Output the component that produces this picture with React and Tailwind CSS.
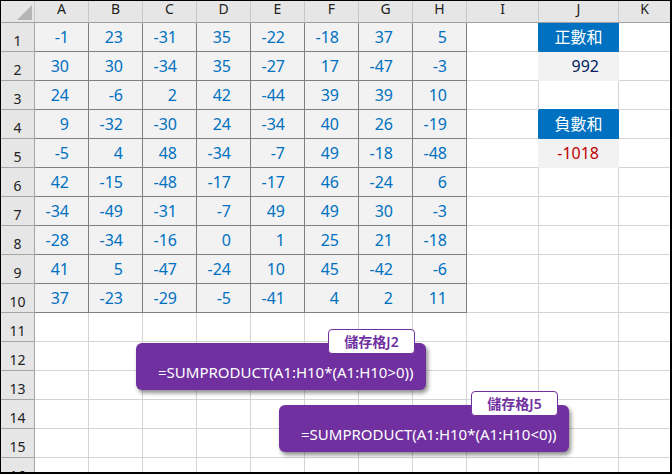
import React from "react";

const COLS = ["A", "B", "C", "D", "E", "F", "G", "H", "I", "J", "K"];

const DATA = [
  [-1, 23, -31, 35, -22, -18, 37, 5],
  [30, 30, -34, 35, -27, 17, -47, -3],
  [24, -6, 2, 42, -44, 39, 39, 10],
  [9, -32, -30, 24, -34, 40, 26, -19],
  [-5, 4, 48, -34, -7, 49, -18, -48],
  [42, -15, -48, -17, -17, 46, -24, 6],
  [-34, -49, -31, -7, 49, 49, 30, -3],
  [-28, -34, -16, 0, 1, 25, 21, -18],
  [41, 5, -47, -24, 10, 45, -42, -6],
  [37, -23, -29, -5, -41, 4, 2, 11],
];

const ROWS = Array.from({ length: 16 }, (_, i) => i + 1);

const font = { fontFamily: '"Noto Sans", "Noto Sans CJK TC", sans-serif' };

// J column content (rows 1..5)
const J_CELLS = {
  1: { text: "正數和", kind: "head" },
  2: { text: "992", kind: "pos" },
  4: { text: "負數和", kind: "head" },
  5: { text: "-1018", kind: "neg" },
};

const cellClass = (r, c) => {
  // c: 1..11 -> A..K
  if (c <= 8 && r <= 10) {
    return "bg-[#f2f2f2] border-r border-b border-[#808080] justify-end pr-[19px] text-[#0070c0]";
  }
  if (c === 9) {
    const edge = r === 1 || r === 4 ? "border-r-[#0070c0]" : r === 2 || r === 5 ? "border-r-[#f2f2f2]" : "border-r-[#d4d4d4]";
    return `bg-white border-r border-b border-b-[#d4d4d4] ${edge}`;
  }
  if (c === 10) {
    const j = J_CELLS[r];
    if (j && j.kind === "head") return "bg-[#0070c0] border-r border-b border-[#0070c0] justify-center text-white";
    if (j) {
      const color = j.kind === "neg" ? "text-[#c00000]" : "text-[#002060]";
      return `bg-[#f2f2f2] border-r border-b border-[#f2f2f2] justify-end pr-[19px] ${color}`;
    }
    if (r === 3) return "bg-white border-r border-r-[#d4d4d4] border-b border-b-[#0070c0]";
    return "bg-white border-r border-b border-[#d4d4d4]";
  }
  if (c === 11) return "bg-white border-b border-[#d4d4d4]";
  return "bg-white border-r border-b border-[#d4d4d4]";
};

const Callout = ({ label, formula, className }) => (
  <div
    className={`absolute w-[290px] h-[47px] rounded-[6px] bg-[#7030a0] shadow-[2px_3px_4px_rgba(0,0,0,0.45)] ${className}`}
  >
    <div className="absolute left-[192px] top-[-14px] w-[87px] h-[25px] rounded-[4px] border border-[#7030a0] bg-white flex items-center justify-center text-[14px] font-semibold text-[#7030a0]">
      {label}
    </div>
    <div className="pl-[22px] pt-[19px] text-[15px] leading-[20px] text-white whitespace-nowrap">
      {formula}
    </div>
  </div>
);

export default function App() {
  return (
    <div
      className="relative w-[672px] h-[474px] overflow-hidden bg-white border-t border-l border-r-2 border-b-2 border-black"
      style={font}
    >
      <div className="grid grid-cols-[34px_repeat(8,54px)_72px_80px_51px]">
        {/* header row */}
        <div className="h-[22px] bg-[#e6e6e6] border-r border-b border-r-[#c8c8c8] border-b-[#a0a0a0] flex items-end justify-end pr-[2px] pb-[2px]">
          <svg width="15" height="15" viewBox="0 0 15 15">
            <polygon points="15,0 15,15 0,15" fill="#b5b5b5" />
          </svg>
        </div>
        {COLS.map((col, i) => (
          <div
            key={col}
            className={`h-[22px] bg-[#e6e6e6] border-b border-b-[#a0a0a0] flex justify-center text-[14px] leading-[16px] text-[#222] ${
              i < COLS.length - 1 ? "border-r border-r-[#c8c8c8]" : ""
            }`}
          >
            {col}
          </div>
        ))}

        {/* body rows */}
        {ROWS.map((r) => (
          <React.Fragment key={r}>
            <div className="h-[29px] bg-[#e6e6e6] border-r border-b border-[#a6a6a6] flex items-end justify-center text-[14px] leading-[20px] text-[#222]">
              {r}
            </div>
            {COLS.map((col, i) => {
              const c = i + 1;
              let content = "";
              if (c <= 8 && r <= 10) content = DATA[r - 1][i];
              if (c === 10 && J_CELLS[r]) content = J_CELLS[r].text;
              return (
                <div
                  key={col + r}
                  className={`h-[29px] flex items-center text-[16px] leading-[28px] ${cellClass(r, c)}`}
                >
                  {content}
                </div>
              );
            })}
          </React.Fragment>
        ))}
      </div>

      <Callout
        label="儲存格J2"
        formula="=SUMPRODUCT(A1:H10*(A1:H10>0))"
        className="left-[135px] top-[342px]"
      />
      <Callout
        label="儲存格J5"
        formula="=SUMPRODUCT(A1:H10*(A1:H10<0))"
        className="left-[278px] top-[404px]"
      />
    </div>
  );
}
